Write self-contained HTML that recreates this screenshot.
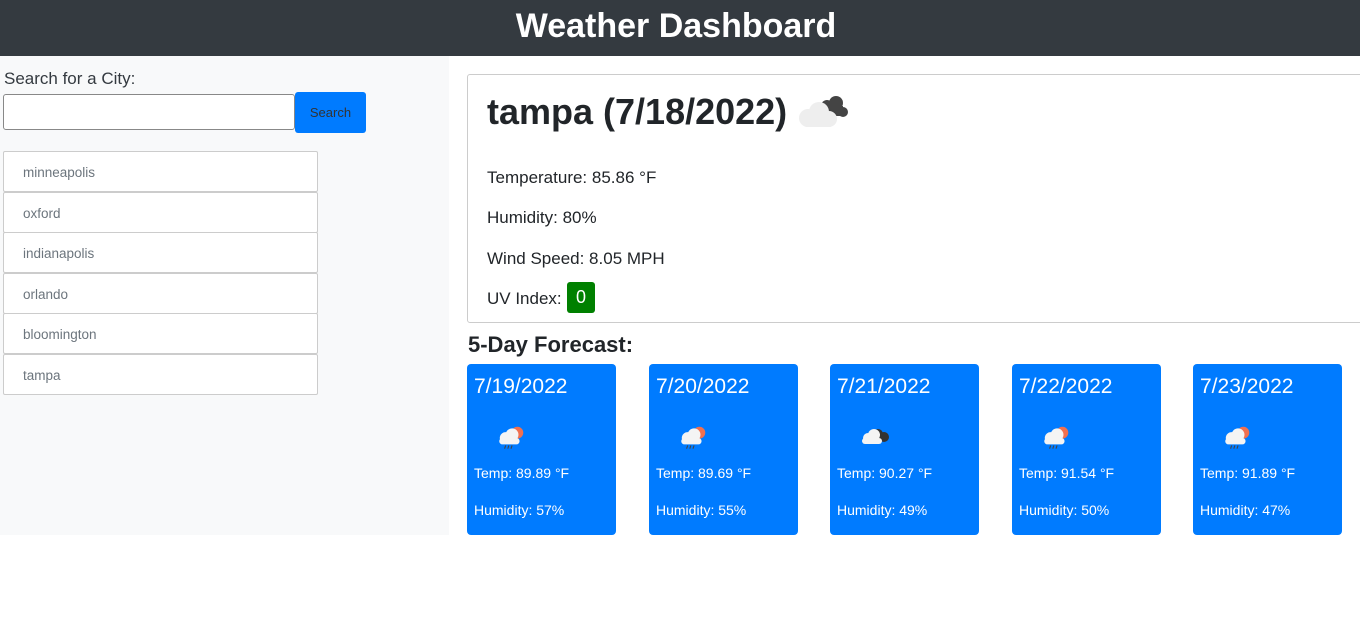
<!DOCTYPE html>
<html><head><style>
*{box-sizing:border-box;margin:0;padding:0}
body{width:1360px;height:642px;background:#fff;font-family:"Liberation Sans",sans-serif;color:#212529;position:relative;overflow:hidden}
.hdr{position:absolute;left:0;top:0;width:1360px;height:56px;background:#343a40;color:#fff;text-align:center;font-size:34px;font-weight:bold;line-height:52px;padding-right:8px}
.side{position:absolute;left:0;top:56px;width:449px;height:479px;background:#f8f9fa}
.lbl{position:absolute;left:4px;top:69px;font-size:17px;color:#343a40}
.inp{position:absolute;left:3px;top:94px;width:292px;height:36px;background:#fff;border:1px solid #888;border-radius:3px}
.btn{position:absolute;left:295px;top:92px;width:71px;height:41px;background:#007bff;border-radius:3px;font-size:13px;color:#333;text-align:center;line-height:41px}
.li{position:absolute;left:3px;width:315px;height:41px;background:#fff;border:1px solid #ccc;border-radius:2px;font-size:13.5px;color:#6c757d;padding-left:19px;line-height:42px}
.card{position:absolute;left:467px;top:74px;width:900px;height:249px;border:1px solid #ccc;border-radius:3px}
.t{position:absolute;left:487px;font-size:17px;color:#212529}
.uv{position:absolute;left:567px;top:282px;width:28px;height:31px;background:#008000;border-radius:3px;color:#fff;font-size:18px;text-align:center;line-height:31px}
.fc{position:absolute;left:468px;top:332px;font-size:22px;font-weight:bold}
.f{position:absolute;top:364px;width:149px;height:171px;background:#007bff;border-radius:4px;color:#fff}
.f .d{position:absolute;left:7px;top:11px;font-size:21px}
.f .a{position:absolute;left:7px;top:101px;font-size:14px}
.f .b{position:absolute;left:7px;top:138px;font-size:14px}
.f svg{position:absolute;left:28px;top:58px}
</style></head><body>
<div class="hdr">Weather Dashboard</div>
<div class="side"></div>
<div class="lbl">Search for a City:</div>
<div class="inp"></div>
<div class="btn">Search</div>
<div class="li" style="top:151px">minneapolis</div>
<div class="li" style="top:192px">oxford</div>
<div class="li" style="top:232px">indianapolis</div>
<div class="li" style="top:273px">orlando</div>
<div class="li" style="top:313px">bloomington</div>
<div class="li" style="top:354px">tampa</div>
<div class="card"></div>
<div style="position:absolute;left:487px;top:91px;font-size:36px;font-weight:600">tampa (7/18/2022)</div>
<svg style="position:absolute;left:795px;top:92px" width="56" height="40" viewBox="0 0 56 40">
<circle cx="32" cy="14" r="6" fill="#444"/><circle cx="41" cy="11" r="7" fill="#444"/><circle cx="48" cy="20" r="5" fill="#444"/><rect x="32" y="14" width="16" height="10" fill="#444"/>
<circle cx="13" cy="26" r="9" fill="#eee"/><circle cx="24" cy="20" r="10" fill="#eee"/><circle cx="34" cy="27" r="8" fill="#eee"/><rect x="8" y="26" width="30" height="9" rx="4" fill="#eee"/>
</svg>
<div class="t" style="top:168px">Temperature: 85.86 °F</div>
<div class="t" style="top:208px">Humidity: 80%</div>
<div class="t" style="top:249px">Wind Speed: 8.05 MPH</div>
<div class="t" style="top:289px">UV Index:</div>
<div class="uv">0</div>
<div class="fc">5-Day Forecast:</div>
<div class="f" style="left:467px"><div class="d">7/19/2022</div><svg width="32" height="32" viewBox="0 0 30 30"><circle cx="21" cy="10" r="5.5" fill="#f07050"/><circle cx="10" cy="15" r="5.5" fill="#f4f4f4"/><circle cx="16" cy="12" r="6" fill="#f4f4f4"/><rect x="4" y="15" width="19" height="6" rx="3" fill="#f4f4f4"/><path d="M10 22l-1 3M13 22l-1 3M16 22l-1 3" stroke="#444" stroke-width="1"/></svg><div class="a">Temp: 89.89 °F</div><div class="b">Humidity: 57%</div></div>
<div class="f" style="left:649px"><div class="d">7/20/2022</div><svg width="32" height="32" viewBox="0 0 30 30"><circle cx="21" cy="10" r="5.5" fill="#f07050"/><circle cx="10" cy="15" r="5.5" fill="#f4f4f4"/><circle cx="16" cy="12" r="6" fill="#f4f4f4"/><rect x="4" y="15" width="19" height="6" rx="3" fill="#f4f4f4"/><path d="M10 22l-1 3M13 22l-1 3M16 22l-1 3" stroke="#444" stroke-width="1"/></svg><div class="a">Temp: 89.69 °F</div><div class="b">Humidity: 55%</div></div>
<div class="f" style="left:830px"><div class="d">7/21/2022</div><svg width="34" height="30" viewBox="0 0 34 30"><circle cx="20" cy="12" r="5" fill="#333"/><circle cx="26" cy="15" r="5" fill="#333"/><circle cx="10" cy="16" r="5" fill="#f4f4f4"/><circle cx="16" cy="13" r="6" fill="#f4f4f4"/><rect x="4" y="16" width="20" height="6" rx="3" fill="#f4f4f4"/></svg><div class="a">Temp: 90.27 °F</div><div class="b">Humidity: 49%</div></div>
<div class="f" style="left:1012px"><div class="d">7/22/2022</div><svg width="32" height="32" viewBox="0 0 30 30"><circle cx="21" cy="10" r="5.5" fill="#f07050"/><circle cx="10" cy="15" r="5.5" fill="#f4f4f4"/><circle cx="16" cy="12" r="6" fill="#f4f4f4"/><rect x="4" y="15" width="19" height="6" rx="3" fill="#f4f4f4"/><path d="M10 22l-1 3M13 22l-1 3M16 22l-1 3" stroke="#444" stroke-width="1"/></svg><div class="a">Temp: 91.54 °F</div><div class="b">Humidity: 50%</div></div>
<div class="f" style="left:1193px"><div class="d">7/23/2022</div><svg width="32" height="32" viewBox="0 0 30 30"><circle cx="21" cy="10" r="5.5" fill="#f07050"/><circle cx="10" cy="15" r="5.5" fill="#f4f4f4"/><circle cx="16" cy="12" r="6" fill="#f4f4f4"/><rect x="4" y="15" width="19" height="6" rx="3" fill="#f4f4f4"/><path d="M10 22l-1 3M13 22l-1 3M16 22l-1 3" stroke="#444" stroke-width="1"/></svg><div class="a">Temp: 91.89 °F</div><div class="b">Humidity: 47%</div></div>
</body></html>
